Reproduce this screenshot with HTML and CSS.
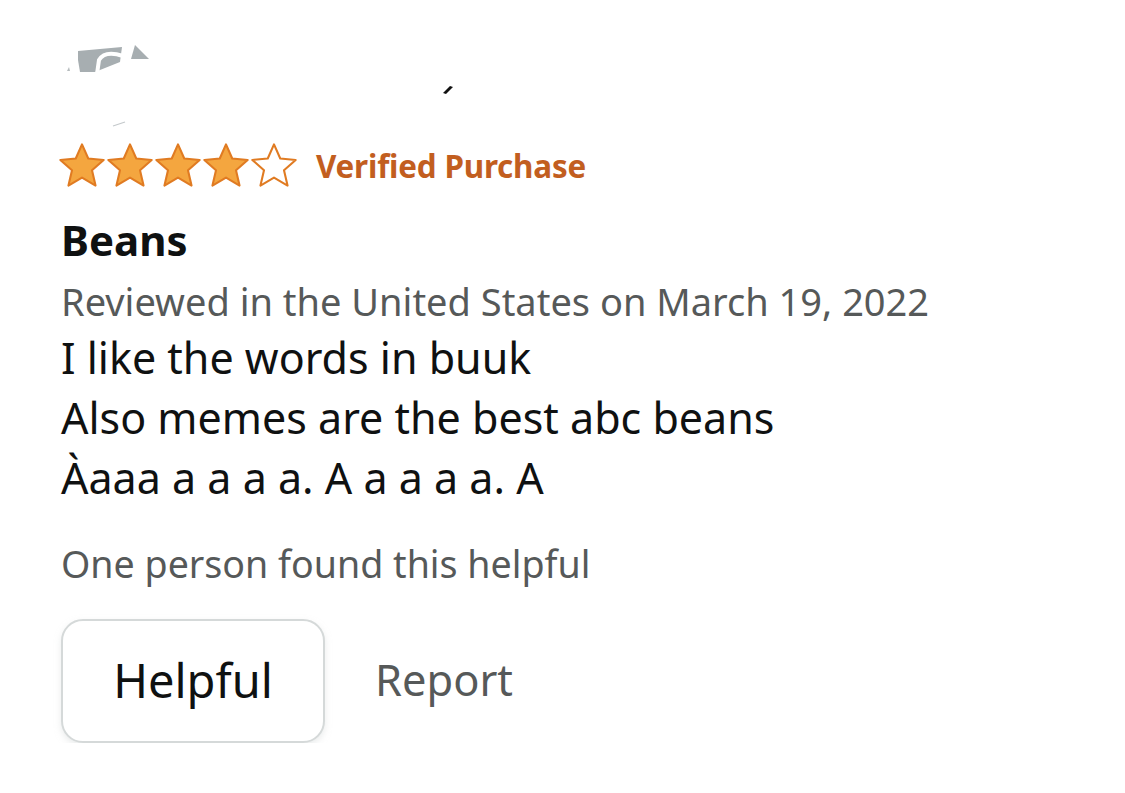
FILE: index.html
```html
<!DOCTYPE html>
<html lang="en">
<head>
<meta charset="utf-8">
<title>Review</title>
<link rel="stylesheet" href="styles.css">
</head>
<body>
<div class="review">
  <svg class="profile" width="450" height="140" viewBox="0 0 450 140" aria-hidden="true">
    <path d="M17 51 L61 47 L59 62 L34 72 L19 72 L17 60 Z" fill="#a7aeb1"/>
    <path d="M62 56 Q44 50 38 60 L36 74" fill="none" stroke="#ffffff" stroke-width="4"/>
    <path d="M70 59 L74 45 L88 59 Z" fill="#a7aeb1"/>
    <path d="M6 71 L8 67 L9 71 Z" fill="#b6bcbe"/>
    <path d="M382 93 L389 86 L392 87 L385 94 Z" fill="#111111"/>
    <path d="M52 126 L64 122" stroke="#c4c9cb" stroke-width="1.2"/>
  </svg>
  <div class="rating-row">
    <div class="stars">
      <svg class="star" viewBox="0 0 24 24"><polygon class="star-full" points="12,1.6 15,8.4 22.4,9.1 16.8,14 18.5,21.4 12,17.6 5.5,21.4 7.2,14 1.6,9.1 9,8.4"/></svg>
      <svg class="star" viewBox="0 0 24 24"><polygon class="star-full" points="12,1.6 15,8.4 22.4,9.1 16.8,14 18.5,21.4 12,17.6 5.5,21.4 7.2,14 1.6,9.1 9,8.4"/></svg>
      <svg class="star" viewBox="0 0 24 24"><polygon class="star-full" points="12,1.6 15,8.4 22.4,9.1 16.8,14 18.5,21.4 12,17.6 5.5,21.4 7.2,14 1.6,9.1 9,8.4"/></svg>
      <svg class="star" viewBox="0 0 24 24"><polygon class="star-full" points="12,1.6 15,8.4 22.4,9.1 16.8,14 18.5,21.4 12,17.6 5.5,21.4 7.2,14 1.6,9.1 9,8.4"/></svg>
      <svg class="star" viewBox="0 0 24 24"><polygon class="star-empty" points="12,1.6 15,8.4 22.4,9.1 16.8,14 18.5,21.4 12,17.6 5.5,21.4 7.2,14 1.6,9.1 9,8.4"/></svg>
    </div>
    <span class="verified">Verified Purchase</span>
  </div>
  <h2 class="title">Beans</h2>
  <p class="meta">Reviewed in the United States on March 19, 2022</p>
  <div class="body">
    <p class="line">I like the words in buuk</p>
    <p class="line">Also memes are the best abc beans</p>
    <p class="line">Àaaa a a a a. A a a a a. A</p>
  </div>
  <p class="helpful-count">One person found this helpful</p>
  <div class="actions">
    <button class="helpful-btn" type="button">Helpful</button>
    <span class="report">Report</span>
  </div>
</div>
</body>
</html>
```
FILE: styles.css
```css
html, body {
  margin: 0;
  padding: 0;
  background: #ffffff;
}

body {
  font-family: "Noto Sans", "Open Sans", "DejaVu Sans", sans-serif;
  color: #0f1111;
}

.review {
  padding-left: 61px;
  display: flex;
  flex-direction: column;
  align-items: flex-start;
}

.profile {
  display: block;
}

.rating-row {
  display: flex;
  align-items: center;
  height: 46px;
  margin-top: 3px;
}

.stars {
  display: flex;
  margin-left: -4px;
}

.star {
  width: 50px;
  height: 50px;
  display: block;
  margin-right: -2px;
}

.star-full {
  fill: #f4a63f;
  stroke: #e07b22;
  stroke-width: 1;
  stroke-linejoin: round;
}

.star-empty {
  fill: #ffffff;
  stroke: #e07b22;
  stroke-width: 1;
  stroke-linejoin: round;
}

.verified {
  margin-left: 19px;
  font-size: 31.4px;
  font-weight: 700;
  color: #c25e1f;
  line-height: 46px;
  letter-spacing: -0.2px;
}

.title {
  margin: 26px 0 0;
  font-size: 42px;
  font-weight: 700;
  line-height: 50px;
  color: #0f1111;
}

.meta {
  margin: 9px 0 0;
  font-size: 38px;
  line-height: 54px;
  color: #565959;
}

.body {
  display: flex;
  flex-direction: column;
}

.line {
  margin: 0;
  font-size: 43px;
  line-height: 60px;
  color: #0f1111;
}

.helpful-count {
  margin: 29px 0 0;
  font-size: 37.6px;
  line-height: 54px;
  color: #565959;
}

.actions {
  display: flex;
  align-items: center;
  margin-top: 28px;
  gap: 50px;
}

.helpful-btn {
  box-sizing: border-box;
  width: 264px;
  height: 124px;
  border: 2px solid #d5d9d9;
  border-radius: 22px;
  background: #ffffff;
  box-shadow: 0 3px 6px rgba(213, 217, 217, 0.5);
  font-family: inherit;
  font-size: 47px;
  color: #0f1111;
  padding: 0 0 2px;
  line-height: 1;
}

.report {
  font-size: 43.4px;
  color: #565959;
  line-height: 1;
  padding-bottom: 2px;
}
```
